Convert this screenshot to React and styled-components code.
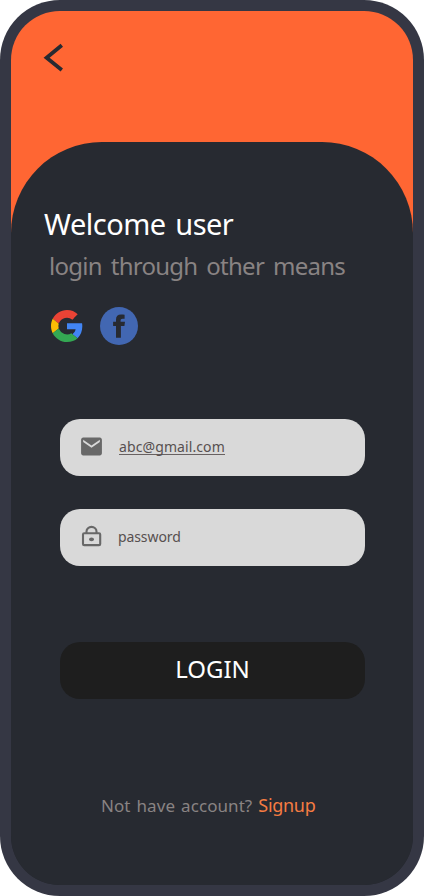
import React from "react";
import styled, { createGlobalStyle } from "styled-components";

const GlobalStyle = createGlobalStyle`
  *, *::before, *::after { box-sizing: border-box; }
  html, body { margin: 0; background: #fff; }
  body { font-family: "Noto Sans", "Open Sans", sans-serif; }
`;

const Phone = styled.main`
  width: 424px;
  height: 896px;
  padding: 11px;
  border-radius: 60px;
  background: #353744;
  overflow: hidden;
`;

const Screen = styled.div`
  height: 874px;
  display: flex;
  flex-direction: column;
  border-radius: 49px;
  background: linear-gradient(#ff6633 0 300px, #272a31 300px);
  overflow: hidden;
`;

const TopBar = styled.header`
  flex: 0 0 131px;
  padding: 32px 0 0 32px;
`;

const BackButton = styled.button`
  display: block;
  width: 22px;
  height: 30px;
  padding: 0;
  border: 0;
  background: none;
`;

const Panel = styled.section`
  flex: 1;
  display: flex;
  flex-direction: column;
  border-radius: 91px 91px 0 0;
  background: #272a31;
`;

const Text = styled.span`
  display: block;
  white-space: pre;
  font-weight: 400;
  font-size: ${(p) => p.$size}px;
  line-height: ${(p) => p.$line}px;
  letter-spacing: ${(p) => p.$track || 0}px;
  word-spacing: ${(p) => p.$word || 0}px;
  color: ${(p) => p.$color};
`;

const Heading = styled.div`
  display: flex;
  flex-direction: column;
  padding: 62px 0 0 33px;
  h1 { margin: 0; }
  h1 + span { margin: 2px 0 0 5px; }
`;

const Socials = styled.div`
  display: flex;
  align-items: center;
  gap: 17px;
  height: 38px;
  margin: 21px 0 0 40px;
  svg { display: block; }
  svg:first-child { margin-bottom: 1px; }
`;

const Form = styled.form`
  display: flex;
  flex-direction: column;
  gap: 33px;
  margin: 74px 48px 0 49px;
`;

const Field = styled.label`
  display: flex;
  align-items: center;
  height: 57px;
  padding-left: 19px;
  border-radius: 20px;
  background: #d9d9d9;
  svg { display: block; flex: none; margin-bottom: 3px; }
`;

const FieldText = styled(Text)`
  margin-left: ${(p) => p.$left}px;
  margin-bottom: 1px;
  border-bottom: ${(p) => (p.$underlined ? "1px solid #686161" : "1px solid transparent")};
`;

const LoginButton = styled.button`
  display: flex;
  align-items: center;
  justify-content: center;
  height: 57px;
  margin-top: 43px;
  padding: 0 0 3px;
  border: 0;
  border-radius: 20px;
  background: #1e1e1e;
  font-family: inherit;
`;

const Footer = styled.footer`
  display: flex;
  align-items: baseline;
  gap: 6px;
  padding: 93px 0 0 90px;
`;

const BackIcon = () => (
  <svg width="22" height="30" viewBox="0 0 22 30" fill="none" stroke="#272a31" strokeWidth="3.8">
    <path d="M18.8 2.3 3.6 14.7l15.2 12.2" />
  </svg>
);

const GoogleIcon = () => (
  <svg width="32" height="32" viewBox="0 0 48 48">
    <path fill="#EA4335" d="M24 9.5c3.54 0 6.71 1.22 9.21 3.6l6.85-6.85C35.9 2.38 30.47 0 24 0 14.62 0 6.51 5.38 2.56 13.22l7.98 6.19C12.43 13.72 17.74 9.5 24 9.5z" />
    <path fill="#4285F4" d="M46.98 24.55c0-1.57-.15-3.09-.38-4.55H24v9.02h12.94c-.58 2.96-2.26 5.48-4.78 7.18l7.73 6c4.51-4.18 7.09-10.36 7.09-17.65z" />
    <path fill="#FBBC05" d="M10.53 28.59c-.48-1.45-.76-2.99-.76-4.59s.27-3.14.76-4.59l-7.98-6.19C.92 16.46 0 20.12 0 24c0 3.88.92 7.54 2.56 10.78l7.97-6.19z" />
    <path fill="#34A853" d="M24 48c6.48 0 11.93-2.13 15.89-5.81l-7.73-6c-2.15 1.45-4.92 2.3-8.16 2.3-6.26 0-11.57-4.22-13.47-9.91l-7.98 6.19C6.51 42.62 14.62 48 24 48z" />
    <path fill="none" stroke="#FBBC05" strokeWidth="3" d="M10.2 19.7a14 14 0 0 0 0 8.6" />
    <path fill="none" stroke="#EA4335" strokeWidth="3" d="M10.6 18.8a14.5 14.5 0 0 1 22.5-5.3" />
    <path fill="none" stroke="#34A853" strokeWidth="3" d="M10.6 29.2a14.5 14.5 0 0 0 21 6.8" />
  </svg>
);

const FacebookIcon = () => (
  <svg width="38" height="38" viewBox="0 0 38 38">
    <circle cx="19" cy="19" r="19" fill="#4267b2" />
    <path fill="#272a31" d="M16 30.7V18.9h-2.9v-4.1H16v-2.3c0-3.2 1.8-5 5-5 1.3 0 2.6.1 3.6.3v3.9h-2c-1.6 0-2 .8-2 2v1.1H25l-.6 4.1h-3.5v11.8z" />
  </svg>
);

const MailIcon = () => (
  <svg width="25" height="27" viewBox="0 0 24 24" preserveAspectRatio="none" fill="#686868">
    <path d="M20 4H4c-1.1 0-1.99.9-1.99 2L2 18c0 1.1.9 2 2 2h16c1.1 0 2-.9 2-2V6c0-1.1-.9-2-2-2zm0 4-8 5-8-5V6l8 5 8-5v2z" />
  </svg>
);

const LockIcon = () => (
  <svg width="25" height="24" viewBox="0 0 25 24" fill="none" stroke="#686868" strokeWidth="2.1">
    <rect x="4" y="9.2" width="17.2" height="11.9" rx="1.2" />
    <path d="M7.5 9V7.5a5 4.6 0 0 1 10 0V9" />
    <ellipse cx="12.5" cy="15.3" rx="2.5" ry="1.9" fill="#686868" stroke="none" />
  </svg>
);

export default function App() {
  return (
    <>
      <GlobalStyle />
      <Phone>
        <Screen>
          <TopBar>
            <BackButton type="button" aria-label="Back"><BackIcon /></BackButton>
          </TopBar>
          <Panel>
            <Heading>
              <Text as="h1" $size={29} $line={40} $track={-0.5} $word={2.5} $color="#fff">Welcome user</Text>
              <Text $size={24} $line={40} $track={-0.75} $word={3.5} $color="#898383">login through other means</Text>
            </Heading>
            <Socials>
              <GoogleIcon />
              <FacebookIcon />
            </Socials>
            <Form>
              <Field>
                <MailIcon />
                <FieldText $left={15} $size={14} $line={15} $track={0.1} $color="#575050" $underlined>abc@gmail.com</FieldText>
              </Field>
              <Field>
                <LockIcon />
                <FieldText $left={14} $size={14} $line={15} $track={-0.1} $color="#575050">password</FieldText>
              </Field>
              <LoginButton type="button">
                <Text $size={24} $line={30} $color="#fff">LOGIN</Text>
              </LoginButton>
            </Form>
            <Footer>
              <Text $size={17} $line={26} $track={0.07} $word={1.5} $color="#898383">Not have account?</Text>
              <Text $size={18} $line={26} $track={-0.3} $color="#f57c42">Signup</Text>
            </Footer>
          </Panel>
        </Screen>
      </Phone>
    </>
  );
}
